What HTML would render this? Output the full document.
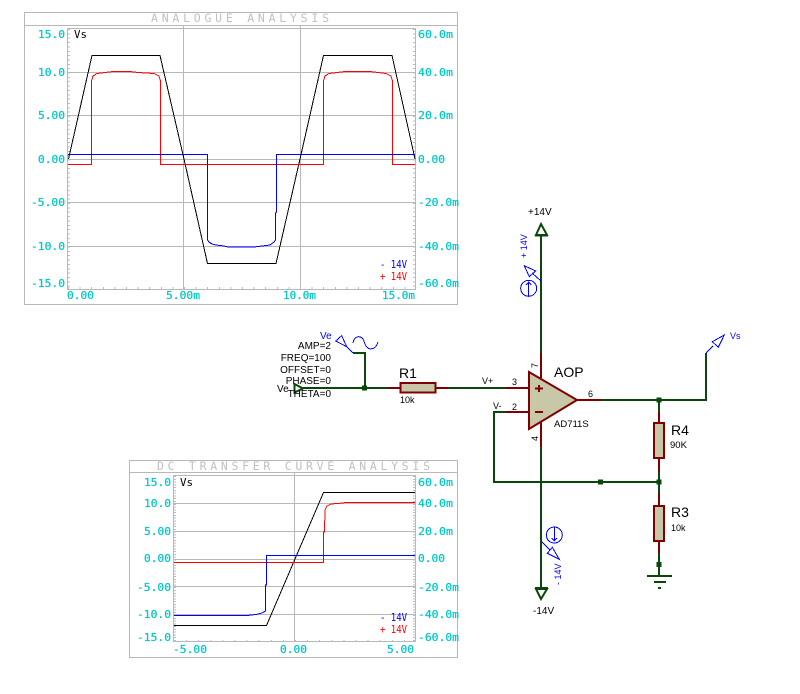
<!DOCTYPE html>
<html><head><meta charset="utf-8"><style>
html,body{margin:0;padding:0;background:#fff}
svg{display:block}
.g{stroke:#b8b8b8;stroke-width:1;fill:none;shape-rendering:crispEdges}
.d{stroke:#bcbcbc;stroke-width:2;fill:none;shape-rendering:crispEdges}
.k{stroke:#000;fill:none;shape-rendering:crispEdges}
.r{stroke:#f00;fill:none;shape-rendering:crispEdges}
.b{stroke:#00f;fill:none;shape-rendering:crispEdges}
.m text{font-family:"DejaVu Sans Mono","Liberation Mono",monospace;font-size:11px}
.c{fill:#00c8c8;stroke:#00c8c8;stroke-width:.25}
.t{fill:#c0c0c0;font-size:11.5px !important}
.w{stroke:#0a470a;stroke-width:2;fill:none;shape-rendering:crispEdges}
.n{stroke:#800000;stroke-width:2;fill:none;shape-rendering:crispEdges}
.p{stroke:#00f;stroke-width:1;fill:none;shape-rendering:crispEdges}
.s text{font-family:"Liberation Sans",Arial,sans-serif;font-size:10px;fill:#000}
.s text.v{fill:#00f}
.j{fill:#0a470a}
</style></head><body>
<svg width="800" height="694" viewBox="0 0 800 694" xmlns="http://www.w3.org/2000/svg">
<rect width="800" height="694" fill="#fff"/>

<!-- GRAPH 1 -->
<g class="g">
<rect x="24.5" y="12.5" width="433" height="292"/>
<path d="M25 25.5H457"/>
<rect x="67.5" y="28.5" width="348" height="261"/>
<path d="M68 72.5H415M68 115.5H415M68 159.5H415M68 202.5H415M68 246.5H415M183.500 26V289M300.500 26V289"/>
</g>
<g class="d" stroke-dasharray="1 3.35">
<path d="M69 29V289M414 29V289"/>
</g>
<g class="d" stroke-dasharray="1 10.6">
<path d="M68 288H415"/>
</g>
<path class="k" d="M68.500 159L92 55.500H160L184 159L207.500 263.500H276L300 159L323.500 55.500H392L415 159"/>
<path class="r" d="M68 164.500H91.500V81L93 76L97 73.500L105 72.500L113 71.500H130L138 72.500L154 73.500L159 76L160.500 81V164.500H323.500V81L325 76L329 73.500L337 72.500L345 71.500H370L378 72.500L386 73.500L391 76L392.500 81V164.500H415"/>
<path class="b" d="M68 154.500H207.500V240L209 242L212 244L216 245L224 246L228 247H254L262 246L270 245L274 242L275.500 240V213L276.500 212V154.500H415"/>
<g class="m">
<g class="c">
<text x="38" y="38" textLength="27" lengthAdjust="spacingAndGlyphs">15.0</text>
<text x="38" y="76" textLength="27" lengthAdjust="spacingAndGlyphs">10.0</text>
<text x="38" y="119" textLength="27" lengthAdjust="spacingAndGlyphs">5.00</text>
<text x="38" y="163" textLength="27" lengthAdjust="spacingAndGlyphs">0.00</text>
<text x="31" y="206" textLength="34" lengthAdjust="spacingAndGlyphs">-5.00</text>
<text x="31" y="250" textLength="34" lengthAdjust="spacingAndGlyphs">-10.0</text>
<text x="31" y="287" textLength="34" lengthAdjust="spacingAndGlyphs">-15.0</text>
<text x="418" y="38" textLength="35" lengthAdjust="spacingAndGlyphs">60.0m</text>
<text x="418" y="76" textLength="35" lengthAdjust="spacingAndGlyphs">40.0m</text>
<text x="418" y="119" textLength="35" lengthAdjust="spacingAndGlyphs">20.0m</text>
<text x="418" y="163" textLength="27" lengthAdjust="spacingAndGlyphs">0.00</text>
<text x="418" y="206" textLength="41" lengthAdjust="spacingAndGlyphs">-20.0m</text>
<text x="418" y="250" textLength="41" lengthAdjust="spacingAndGlyphs">-40.0m</text>
<text x="418" y="287" textLength="41" lengthAdjust="spacingAndGlyphs">-60.0m</text>
<text x="67" y="299" textLength="27" lengthAdjust="spacingAndGlyphs">0.00</text>
<text x="166" y="299" textLength="34" lengthAdjust="spacingAndGlyphs">5.00m</text>
<text x="283" y="299" textLength="33" lengthAdjust="spacingAndGlyphs">10.0m</text>
<text x="382" y="299" textLength="33" lengthAdjust="spacingAndGlyphs">15.0m</text>
</g>
<text class="t" x="151" y="22" textLength="178">ANALOGUE ANALYSIS</text>
<text x="74" y="38" textLength="13" lengthAdjust="spacingAndGlyphs" fill="#000">Vs</text>
<text x="380" y="268" textLength="27" lengthAdjust="spacingAndGlyphs" fill="#00f">- 14V</text>
<text x="380" y="280" textLength="27" lengthAdjust="spacingAndGlyphs" fill="#f00">+ 14V</text>
</g>

<!-- GRAPH 2 -->
<g class="g">
<rect x="129.5" y="460.5" width="328" height="197"/>
<path d="M130 472.5H457"/>
<rect x="173.5" y="475.5" width="242" height="166"/>
<path d="M174 503.5H415M174 531.5H415M174 559.5H415M174 586.5H415M174 614.5H415M294.500 473V642"/>
</g>
<g class="d" stroke-dasharray="1 1.78">
<path d="M175 476V642M414 476V642"/>
</g>
<g class="d" stroke-dasharray="1 11.1">
<path d="M174 641H415"/>
</g>
<path class="k" d="M174 625.500H266.500L323.500 492.500H415"/>
<path class="r" d="M174 562.500H323.500V532H324.500L325 510L327 506L331 504L343 503L345 502.500H415"/>
<path class="b" d="M174 615.500H247L256 614.500L262 613L265.500 611V585H266.500V555.500H415"/>
<g class="m">
<g class="c">
<text x="144" y="486" textLength="27" lengthAdjust="spacingAndGlyphs">15.0</text>
<text x="144" y="507" textLength="27" lengthAdjust="spacingAndGlyphs">10.0</text>
<text x="144" y="535" textLength="27" lengthAdjust="spacingAndGlyphs">5.00</text>
<text x="144" y="562" textLength="27" lengthAdjust="spacingAndGlyphs">0.00</text>
<text x="137" y="591" textLength="34" lengthAdjust="spacingAndGlyphs">-5.00</text>
<text x="137" y="618" textLength="34" lengthAdjust="spacingAndGlyphs">-10.0</text>
<text x="137" y="641" textLength="34" lengthAdjust="spacingAndGlyphs">-15.0</text>
<text x="418" y="486" textLength="35" lengthAdjust="spacingAndGlyphs">60.0m</text>
<text x="418" y="507" textLength="35" lengthAdjust="spacingAndGlyphs">40.0m</text>
<text x="418" y="535" textLength="35" lengthAdjust="spacingAndGlyphs">20.0m</text>
<text x="418" y="562" textLength="27" lengthAdjust="spacingAndGlyphs">0.00</text>
<text x="418" y="591" textLength="41" lengthAdjust="spacingAndGlyphs">-20.0m</text>
<text x="418" y="618" textLength="41" lengthAdjust="spacingAndGlyphs">-40.0m</text>
<text x="418" y="641" textLength="41" lengthAdjust="spacingAndGlyphs">-60.0m</text>
<text x="173" y="653" textLength="34" lengthAdjust="spacingAndGlyphs">-5.00</text>
<text x="280" y="653" textLength="27" lengthAdjust="spacingAndGlyphs">0.00</text>
<text x="387" y="653" textLength="27" lengthAdjust="spacingAndGlyphs">5.00</text>
</g>
<text class="t" x="157" y="470" textLength="273">DC TRANSFER CURVE ANALYSIS</text>
<text x="180" y="486" textLength="13" lengthAdjust="spacingAndGlyphs" fill="#000">Vs</text>
<text x="380" y="621" textLength="27" lengthAdjust="spacingAndGlyphs" fill="#00f">- 14V</text>
<text x="380" y="633" textLength="27" lengthAdjust="spacingAndGlyphs" fill="#f00">+ 14V</text>
</g>

<!-- SCHEMATIC wires -->
<path class="w" d="M303 388H388M448 388H506M365 388V353H353"/>
<path class="n" d="M388 388H400M435 388H448M506 388H529"/>
<rect x="400.500" y="383" width="35" height="9.500" fill="#c8c8a8" stroke="#800000" stroke-width="2" shape-rendering="crispEdges"/>
<path class="w" d="M541 235V353M541 447V590M601 400H706V353M659 400V412M659 472V493M659 553V576M660 482H494V412H506"/>
<path class="n" d="M541 353V378M541 422V447M577 400H601M506 412H529M659 412V423M659 458V472M659 493V506M659 541V553"/>
<rect x="654" y="423" width="10" height="35" fill="#c8c8a8" stroke="#800000" stroke-width="2" shape-rendering="crispEdges"/>
<rect x="654" y="506" width="10" height="35" fill="#c8c8a8" stroke="#800000" stroke-width="2" shape-rendering="crispEdges"/>
<polygon points="529,372 529,429 577,400" fill="#c8c8a8" stroke="#800000" stroke-width="2"/>
<path class="n" d="M535 388.500H543M539 385V392M535 412H543"/>
<!-- junctions -->
<rect class="j" x="362" y="385.500" width="5" height="5"/>
<rect class="j" x="656.500" y="397.500" width="5" height="5"/>
<rect class="j" x="656.500" y="479.500" width="5" height="5"/>
<rect class="j" x="598" y="479.500" width="5" height="5"/>
<rect class="j" x="656.500" y="562" width="5" height="5"/>
<!-- terminals -->
<polygon points="294.500,384 294.500,392.500 303,388.500" fill="none" stroke="#0a470a" stroke-width="2"/>
<polygon points="541,224 536,235 547,235" fill="none" stroke="#0a470a" stroke-width="2"/>
<path class="w" d="M535 235.500H548"/>
<polygon points="541,599 536,589 547,589" fill="none" stroke="#0a470a" stroke-width="2"/>
<path class="w" d="M535 588H548"/>
<!-- ground -->
<path class="w" d="M647 576H672M654 582H666M658 588H661"/>
<!-- blue probes -->
<g class="p">
<path d="M353 353L346 346"/>
<polygon points="335.700,341 341.700,335.700 346.700,346.700"/>
<path d="M353 343C354 335 362 335 364 341C366 349 370 350 374 348C376 347 377 345 378 342"/>
<path d="M706 353L713 346"/>
<polygon points="712.300,341.700 724.300,335 718.300,347.300"/>
<path d="M541 281L532 273"/>
<polygon points="524.300,265.700 535.700,271 529.300,276.700"/>
<circle cx="528.700" cy="288.300" r="8"/>
<path d="M528.700 296V282M526 285L528.700 282L531.400 285"/>
<path d="M542 542L550 550"/>
<polygon points="547.300,553.300 552.300,547.300 559.300,559.300"/>
<circle cx="554.300" cy="535" r="8"/>
<path d="M554.300 527V541M551.600 538L554.300 541L557 538"/>
</g>
<!-- schematic text -->
<g class="s">
<text class="v" x="320" y="339">Ve</text>
<text x="331" y="349" text-anchor="end">AMP=2</text>
<text x="331" y="361" text-anchor="end">FREQ=100</text>
<text x="331" y="373" text-anchor="end">OFFSET=0</text>
<text x="331" y="384" text-anchor="end">PHASE=0</text>
<text x="331" y="397" text-anchor="end">THETA=0</text>
<text x="277" y="392">Ve</text>
<text x="399" y="378" style="font-size:14px">R1</text>
<text x="400" y="403" style="font-size:9px">10k</text>
<text x="482" y="384" style="font-size:9px">V+</text>
<text x="512" y="385" style="font-size:9px">3</text>
<text x="493" y="409" style="font-size:9px">V-</text>
<text x="512" y="410" style="font-size:9px">2</text>
<text x="588" y="397" style="font-size:9px">6</text>
<text x="554" y="377" style="font-size:14px">AOP</text>
<text x="554" y="427" style="font-size:9.500px">AD711S</text>
<text x="671" y="435" style="font-size:14px">R4</text>
<text x="670" y="448" style="font-size:9.500px">90K</text>
<text x="671" y="517" style="font-size:14px">R3</text>
<text x="671" y="531" style="font-size:9px">10k</text>
<text x="528" y="215" style="font-size:10px">+14V</text>
<text x="533" y="614" style="font-size:10px">-14V</text>
<text class="v" x="730" y="339" style="font-size:9px">Vs</text>
<text x="0" y="0" style="font-size:9px" transform="translate(538,368) rotate(-90)">7</text>
<text x="0" y="0" style="font-size:9px" transform="translate(538,441) rotate(-90)">4</text>
<text class="v" x="0" y="0" style="font-size:9px" transform="translate(527,258) rotate(-90)">+ 14V</text>
<text class="v" x="0" y="0" style="font-size:9px" transform="translate(561,585) rotate(-90)">- 14V</text>
</g>
</svg>
</body></html>
